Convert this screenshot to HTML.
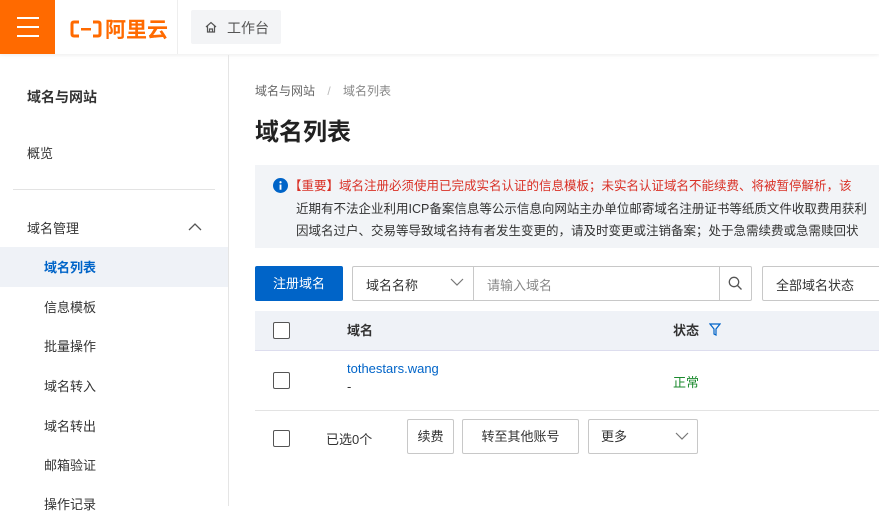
<!DOCTYPE html>
<html><head><meta charset="utf-8"><style>
*{margin:0;padding:0;box-sizing:border-box}
body{width:879px;height:506px;overflow:hidden;background:#fff;font-family:"Liberation Sans","Noto Sans CJK SC",sans-serif;color:#333;font-size:13px;position:relative}
.a{position:absolute;white-space:nowrap}
.cb{position:absolute;width:17px;height:17px;border:1.5px solid #555;border-radius:2px;background:#fff}
.btn{position:absolute;border:1px solid #c8c8c8;background:#fff;height:35px;line-height:33px;text-align:center;font-size:13px;border-radius:2px}
.side{position:absolute;left:44px;font-size:13px;color:#333}
</style></head><body>
<div class="a" style="left:0;top:0;width:879px;height:54px;background:#fff;box-shadow:0 1px 4px rgba(0,0,0,.08)"></div>
<div class="a" style="left:0;top:0;width:55px;height:54px;background:#ff6a00"></div>
<div class="a" style="left:17px;top:17px;width:22px;height:2px;background:#fff"></div>
<div class="a" style="left:17px;top:26px;width:22px;height:2px;background:#fff"></div>
<div class="a" style="left:17px;top:35px;width:22px;height:2px;background:#fff"></div>
<svg class="a" style="left:70px;top:19px" width="32" height="20" viewBox="0 0 32 20"><path d="M9 3H4Q2 3 2 5V15Q2 17 4 17H9M23 3H28Q30 3 30 5V15Q30 17 28 17H23" fill="none" stroke="#ff6a00" stroke-width="3"/><rect x="11" y="9" width="10" height="2.5" fill="#ff6a00"/></svg>
<div class="a" style="left:105px;top:14px;font-size:21px;font-weight:bold;color:#ff6a00">阿里云</div>
<div class="a" style="left:177px;top:0;width:1px;height:54px;background:#eee"></div>
<div class="a" style="left:191px;top:10px;width:90px;height:34px;background:#f3f4f6;border-radius:2px"></div>
<svg class="a" style="left:204px;top:20px" width="14" height="14" viewBox="0 0 14 14"><path d="M2 7L7 2.5L12 7M3.5 6V12H10.5V6M5.5 12V9H8.5V12" fill="none" stroke="#555" stroke-width="1.2"/></svg>
<div class="a" style="left:227px;top:18px;font-size:14px;color:#555">工作台</div>
<div class="a" style="left:228px;top:55px;width:1px;height:451px;background:#e5e5e5"></div>
<div class="a" style="left:27px;top:87px;font-size:14px;font-weight:bold;color:#333">域名与网站</div>
<div class="a" style="left:27px;top:143px;font-size:13px">概览</div>
<div class="a" style="left:13px;top:189px;width:202px;height:1px;background:#e3e3e3"></div>
<div class="a" style="left:27px;top:218px;font-size:13px">域名管理</div>
<svg class="a" style="left:188px;top:222px" width="14" height="10" viewBox="0 0 14 10"><path d="M1 8L7 2L13 8" fill="none" stroke="#555" stroke-width="1.3"/></svg>
<div class="a" style="left:0;top:247px;width:228px;height:40px;background:#eff2f7"></div>
<div class="side a" style="top:257px;color:#0064c8;font-weight:bold">域名列表</div>
<div class="side a" style="top:297px">信息模板</div>
<div class="side a" style="top:336px">批量操作</div>
<div class="side a" style="top:376px">域名转入</div>
<div class="side a" style="top:416px">域名转出</div>
<div class="side a" style="top:455px">邮箱验证</div>
<div class="side a" style="top:494px">操作记录</div>
<div class="a" style="left:255px;top:82px;font-size:12px;color:#666">域名与网站 <span style="color:#bbb;margin:0 9px">/</span> <span style="color:#888">域名列表</span></div>
<div class="a" style="left:255px;top:112px;font-size:24px;font-weight:bold;color:#222">域名列表</div>
<div class="a" style="left:255px;top:165px;width:624px;height:83px;background:#f2f4f7;overflow:hidden"></div>
<svg class="a" style="left:273px;top:178px" width="15" height="15" viewBox="0 0 16 16"><circle cx="8" cy="8" r="8" fill="#0064c8"/><rect x="7" y="7" width="2" height="5.5" fill="#fff"/><circle cx="8" cy="4.5" r="1.2" fill="#fff"/></svg>
<div class="a" style="left:289px;top:175px;font-size:12.5px;line-height:22.5px;color:#333;width:590px;overflow:hidden">
<div style="color:#d93026">【重要】域名注册必须使用已完成实名认证的信息模板；未实名认证域名不能续费、将被暂停解析，该</div>
<div style="margin-left:7px">近期有不法企业利用ICP备案信息等公示信息向网站主办单位邮寄域名注册证书等纸质文件收取费用获利</div>
<div style="margin-left:7px">因域名过户、交易等导致域名持有者发生变更的，请及时变更或注销备案；处于急需续费或急需赎回状</div>
</div>
<div class="a" style="left:255px;top:266px;width:88px;height:35px;background:#0064c8;color:#fff;font-size:13px;line-height:35px;text-align:center;border-radius:2px">注册域名</div>
<div class="a" style="left:352px;top:266px;width:400px;height:35px;border:1px solid #c8c8c8;border-radius:2px"></div>
<div class="a" style="left:366px;top:275px;font-size:13px">域名名称</div>
<svg class="a" style="left:450px;top:278px" width="14" height="9" viewBox="0 0 14 9"><path d="M1 1L7 7L13 1" fill="none" stroke="#777" stroke-width="1.2"/></svg>
<div class="a" style="left:473px;top:267px;width:1px;height:33px;background:#c8c8c8"></div>
<div class="a" style="left:487px;top:275px;font-size:13px;color:#888">请输入域名</div>
<div class="a" style="left:719px;top:267px;width:1px;height:33px;background:#c8c8c8"></div>
<svg class="a" style="left:728px;top:276px" width="15" height="15" viewBox="0 0 15 15"><circle cx="6" cy="6" r="4.7" fill="none" stroke="#555" stroke-width="1.3"/><path d="M9.5 9.5L13.5 13.5" stroke="#555" stroke-width="1.3"/></svg>
<div class="a" style="left:762px;top:266px;width:130px;height:35px;border:1px solid #c8c8c8;border-radius:2px"></div>
<div class="a" style="left:776px;top:275px;font-size:13px">全部域名状态</div>
<div class="a" style="left:255px;top:311px;width:624px;height:40px;background:#eff2f7;border-bottom:1px solid #dde"></div>
<div class="cb" style="left:273px;top:322px"></div>
<div class="a" style="left:347px;top:320px;font-size:13px;font-weight:bold">域名</div>
<div class="a" style="left:673px;top:320px;font-size:13px;font-weight:bold">状态</div>
<svg class="a" style="left:709px;top:323px" width="12" height="13" viewBox="0 0 12 13"><path d="M1 1H11L7 6V12L5 11V6Z" fill="none" stroke="#0064c8" stroke-width="1.2"/></svg>
<div class="cb" style="left:273px;top:372px"></div>
<div class="a" style="left:347px;top:361px;font-size:13px;color:#0064c8">tothestars.wang</div>
<div class="a" style="left:347px;top:379px;font-size:13px">-</div>
<div class="a" style="left:673px;top:372px;font-size:13px;color:#1b8a2e">正常</div>
<div class="a" style="left:255px;top:410px;width:624px;height:1px;background:#e3e3e3"></div>
<div class="cb" style="left:273px;top:430px"></div>
<div class="a" style="left:326px;top:429px;font-size:13px">已选0个</div>
<div class="btn" style="left:407px;top:419px;width:47px">续费</div>
<div class="btn" style="left:462px;top:419px;width:117px">转至其他账号</div>
<div class="btn" style="left:588px;top:419px;width:110px;text-align:left;padding-left:12px">更多</div>
<svg class="a" style="left:675px;top:432px" width="14" height="9" viewBox="0 0 14 9"><path d="M1 1L7 7L13 1" fill="none" stroke="#777" stroke-width="1.2"/></svg>
</body></html>
